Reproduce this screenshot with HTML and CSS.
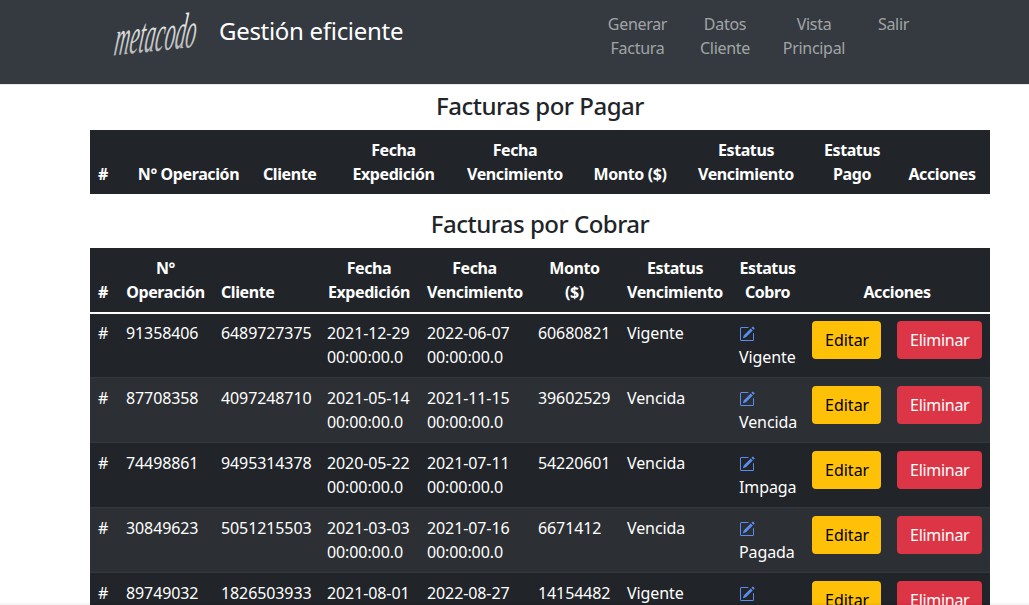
FILE: index.html
```html
<!DOCTYPE html>
<html lang="es">

<head>
    <meta charset="UTF-8">
    <meta name="viewport" content="width=device-width, initial-scale=1.0">
    <title>Gestión eficiente</title>
    <link rel="stylesheet" href="styles.css">
</head>

<body>
    <nav class="navbar">
        <a class="brand-logo" href="#">
            <svg class="logo-svg" width="96" height="56" viewBox="0 0 96 56">
                <defs>
                    <linearGradient id="logoFill" x1="0" y1="0" x2="0" y2="1">
                        <stop offset="0" stop-color="#ffffff"/>
                        <stop offset="1" stop-color="#a8a8a8"/>
                    </linearGradient>
                </defs>
                <text x="3" y="42" class="logo-text" fill="url(#logoFill)" textLength="82" lengthAdjust="spacingAndGlyphs" transform="translate(7 0) rotate(-6 45 30) skewX(-14)">metacodo</text>
            </svg>
        </a>
        <a class="brand-title" href="#">Gestión eficiente</a>
        <ul class="nav-links">
            <li class="link-factura"><a href="#">Generar Factura</a></li>
            <li class="link-cliente"><a href="#">Datos Cliente</a></li>
            <li class="link-vista"><a href="#">Vista Principal</a></li>
            <li class="link-salir"><a href="#">Salir</a></li>
        </ul>
    </nav>

    <main class="container">
        <h4>Facturas por Pagar</h4>
        <table class="table table-pagar">
            <colgroup>
                <col class="p1"><col class="p2"><col class="p3"><col class="p4"><col class="p5">
                <col class="p6"><col class="p7"><col class="p8"><col class="p9">
            </colgroup>
            <thead>
                <tr>
                    <th class="th-left">#</th>
                    <th>N° Operación</th>
                    <th class="th-left">Cliente</th>
                    <th>Fecha Expedición</th>
                    <th>Fecha Vencimiento</th>
                    <th>Monto ($)</th>
                    <th>Estatus Vencimiento</th>
                    <th>Estatus Pago</th>
                    <th>Acciones</th>
                </tr>
            </thead>
        </table>

        <h4>Facturas por Cobrar</h4>
        <table class="table table-cobrar">
            <colgroup>
                <col class="c1"><col class="c2"><col class="c3"><col class="c4"><col class="c5">
                <col class="c6"><col class="c7"><col class="c8"><col class="c9">
            </colgroup>
            <thead>
                <tr>
                    <th class="th-left">#</th>
                    <th>N° Operación</th>
                    <th class="th-left">Cliente</th>
                    <th>Fecha Expedición</th>
                    <th>Fecha Vencimiento</th>
                    <th>Monto<br>($)</th>
                    <th>Estatus Vencimiento</th>
                    <th>Estatus Cobro</th>
                    <th>Acciones</th>
                </tr>
            </thead>
            <tbody id="rows"></tbody>
        </table>
    </main>

    <div class="bottom-shade"></div>

    <script src="main.js"></script>
</body>

</html>
```

FILE: main.js
```js
const facturas = [
    ['91358406', '6489727375', '2021-12-29', '2022-06-07', '60680821', 'Vigente', 'Vigente'],
    ['87708358', '4097248710', '2021-05-14', '2021-11-15', '39602529', 'Vencida', 'Vencida'],
    ['74498861', '9495314378', '2020-05-22', '2021-07-11', '54220601', 'Vencida', 'Impaga'],
    ['30849623', '5051215503', '2021-03-03', '2021-07-16', '6671412', 'Vencida', 'Pagada'],
    ['89749032', '1826503933', '2021-08-01', '2022-08-27', '14154482', 'Vigente', 'Vigente']
];

const editIcon = `
    <svg class="edit-icon" viewBox="0 0 16 16" fill="currentColor">
        <path d="M15.502 1.94a.5.5 0 0 1 0 .706L14.459 3.69l-2-2L13.502.646a.5.5 0 0 1 .707 0l1.293 1.293zm-1.75 2.456-2-2L4.939 9.21a.5.5 0 0 0-.121.196l-.805 2.414a.25.25 0 0 0 .316.316l2.414-.805a.5.5 0 0 0 .196-.12l6.813-6.814z"/>
        <path fill-rule="evenodd" d="M1 13.5A1.5 1.5 0 0 0 2.5 15h11a1.5 1.5 0 0 0 1.5-1.5v-6a.5.5 0 0 0-1 0v6a.5.5 0 0 1-.5.5h-11a.5.5 0 0 1-.5-.5v-11a.5.5 0 0 1 .5-.5H9a.5.5 0 0 0 0-1H2.5A1.5 1.5 0 0 0 1 2.5v11z"/>
    </svg>`;

document.getElementById('rows').innerHTML = facturas.map(f => `
    <tr>
        <td>#</td>
        <td>${f[0]}</td>
        <td>${f[1]}</td>
        <td>${f[2]} 00:00:00.0</td>
        <td>${f[3]} 00:00:00.0</td>
        <td>${f[4]}</td>
        <td>${f[5]}</td>
        <td><a href="#" class="edit-link">${editIcon}</a><br>${f[6]}</td>
        <td class="acciones">
            <button class="btn btn-warning">Editar</button>
            <button class="btn btn-danger">Eliminar</button>
        </td>
    </tr>
`).join('');
```

FILE: styles.css
```css
* {
    box-sizing: border-box;
}

body {
    font-family: "Noto Sans", sans-serif;
    font-size: 16px;
    line-height: 24px;
    letter-spacing: -0.1px;
    color: #212529;
    background-color: #ffffff;
    margin: 0;
}

a {
    text-decoration: none;
}

.navbar {
    display: flex;
    align-items: flex-start;
    height: 85px;
    background-color: #343a40;
    border-bottom: 1px solid #e6eaee;
    padding-left: 112px;
}

.brand-logo {
    display: block;
    width: 96px;
    height: 56px;
    margin-top: 8px;
}

.logo-svg {
    overflow: visible;
}

.logo-text {
    font-family: "Liberation Serif", serif;
    font-style: italic;
    font-size: 50px;
}

.brand-title {
    margin: 14px 0 0 11px;
    font-size: 24px;
    line-height: 34px;
    letter-spacing: -0.3px;
    color: #ffffff;
}

.nav-links {
    display: flex;
    list-style: none;
    margin: 12px 0 0 0;
    padding: 0;
    position: absolute;
    left: 601px;
    text-align: center;
}

.nav-links li {
    padding: 0 4px;
}

.nav-links a {
    letter-spacing: -0.3px;
    color: rgba(255, 255, 255, 0.55);
}

.link-factura { width: 73px; }
.link-cliente { width: 102px; }
.link-vista { width: 76px; }
.link-salir { width: 83px; }

.container {
    width: 900px;
    margin-left: 90px;
}

h4 {
    font-size: 24px;
    font-weight: 500;
    line-height: 29px;
    letter-spacing: -0.5px;
    text-align: center;
    margin: 6px 0 10px 0;
}

.table {
    width: 100%;
    table-layout: fixed;
    border-collapse: collapse;
    background-color: #212529;
    color: #ffffff;
    margin-bottom: 15px;
}

th,
td {
    padding: 8px;
    border-bottom: 1px solid #32383e;
}

th {
    text-align: center;
    vertical-align: bottom;
    font-weight: 700;
    letter-spacing: -0.4px;
    border-bottom: none;
}

th.th-left {
    text-align: left;
}

td {
    text-align: left;
    vertical-align: top;
}

tbody {
    border-top: 2px solid #ffffff;
}

tbody tr:first-child td {
    padding-top: 7px;
}

tbody tr:nth-child(even) {
    background-color: #2c3034;
}

col.p1 { width: 32px; }
col.p2 { width: 133px; }
col.p3 { width: 80px; }
col.p4 { width: 117px; }
col.p5 { width: 126px; }
col.p6 { width: 104px; }
col.p7 { width: 128px; }
col.p8 { width: 84px; }
col.p9 { width: 96px; }

col.c1 { width: 28px; }
col.c2 { width: 95px; }
col.c3 { width: 106px; }
col.c4 { width: 100px; }
col.c5 { width: 111px; }
col.c6 { width: 89px; }
col.c7 { width: 112px; }
col.c8 { width: 73px; }
col.c9 { width: 186px; }

.edit-link {
    color: #5b8def;
    display: inline-block;
    height: 24px;
}

.edit-icon {
    width: 16px;
    height: 16px;
    vertical-align: -3px;
}

.acciones {
    white-space: nowrap;
}

.btn {
    font-family: inherit;
    font-size: 16px;
    line-height: 24px;
    padding: 6px 12px;
    border: 1px solid transparent;
    border-radius: 4px;
    height: 38px;
}

.btn-warning {
    width: 69px;
    background-color: #ffc107;
    color: #000000;
}

.btn-danger {
    width: 85px;
    margin-left: 12px;
    letter-spacing: -0.3px;
    background-color: #dc3545;
    color: #ffffff;
}

.bottom-shade {
    position: fixed;
    left: 0;
    right: 0;
    bottom: 0;
    height: 3px;
    background: linear-gradient(rgba(0, 0, 0, 0), rgba(0, 0, 0, 0.06));
}
```
